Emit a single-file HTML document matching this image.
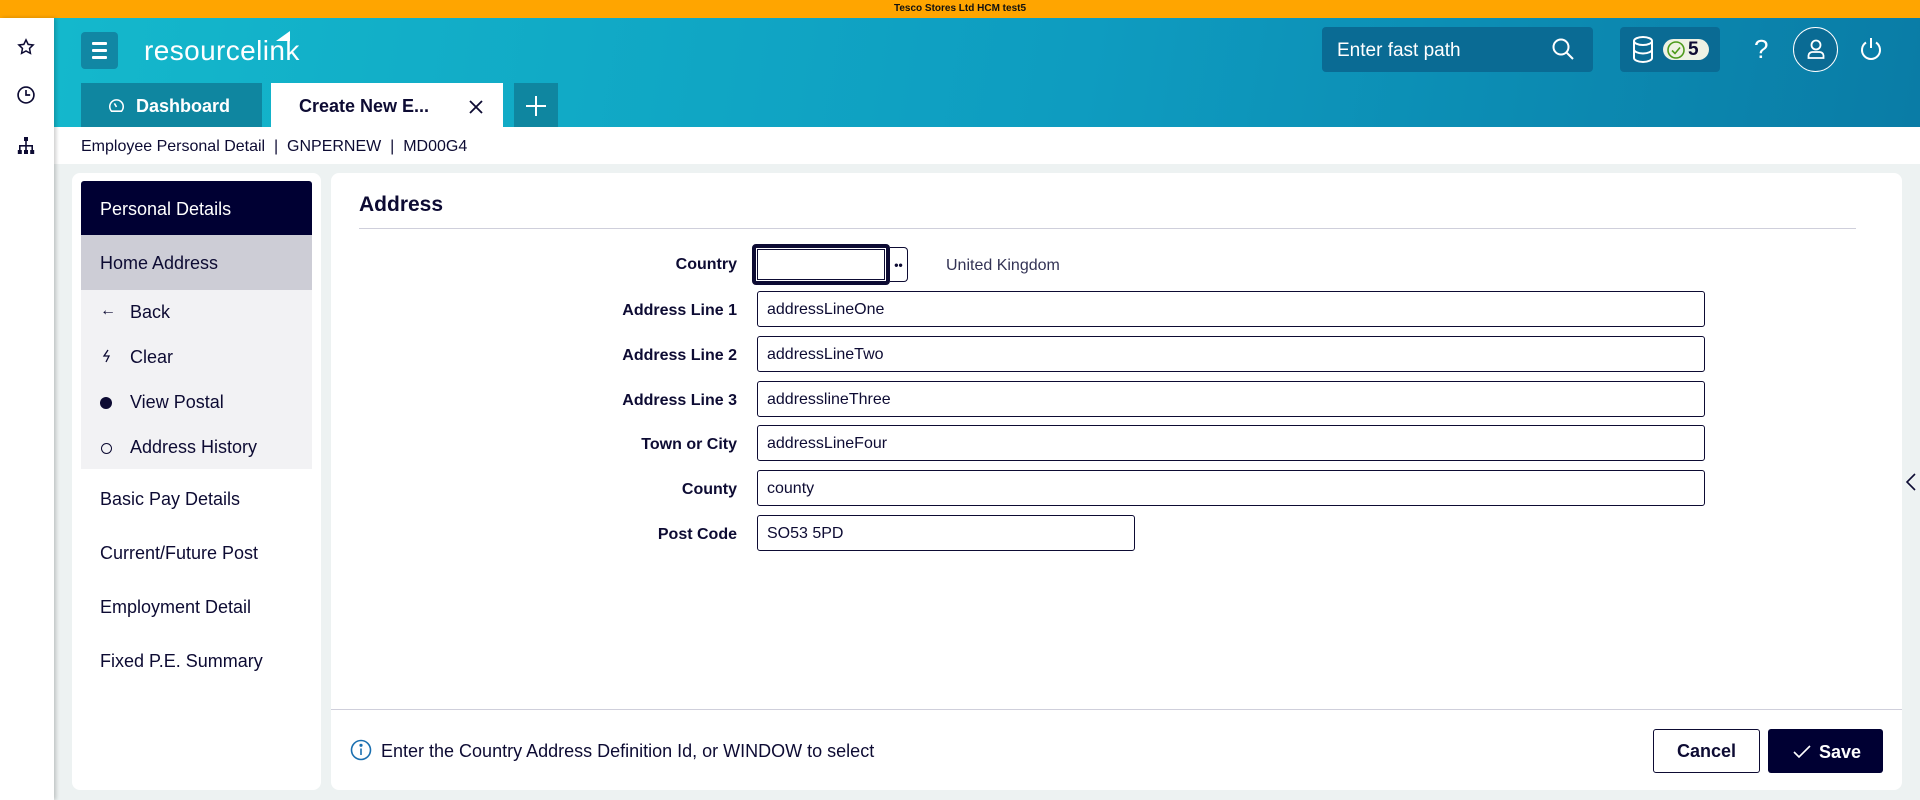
<!DOCTYPE html>
<html><head><meta charset="utf-8"><style>
*{box-sizing:border-box;margin:0;padding:0}
body{width:1920px;height:800px;overflow:hidden;background:#edf2f2;font-family:"Liberation Sans",sans-serif;color:#0d0b33;position:relative}
.abs{position:absolute}
.top{left:0;top:0;width:1920px;height:18px;background:#ffa500;font-size:10px;font-weight:bold;text-align:center;line-height:18px;color:#111}
.side{left:0;top:18px;width:54px;height:782px;background:#fff;box-shadow:2px 0 4px rgba(0,0,0,.2);z-index:3}
.hdr{left:54px;top:18px;width:1866px;height:109px;background:linear-gradient(100deg,#14b8cc 0%,#0e9cc0 55%,#0a7ca6 100%)}
.ham{left:81px;top:32px;width:37px;height:37px;background:#1187a4;border-radius:4px}
.ham i{position:absolute;left:11px;width:15px;height:3px;background:#fff;border-radius:1px}
.logo{left:144px;top:35px;color:#fff;font-size:28px;letter-spacing:0.4px}
.tab{top:83px;height:44px;font-size:18px;font-weight:bold;line-height:46px}
.search{left:1322px;top:27px;width:271px;height:45px;background:#0a6b94;border-radius:4px;color:#fff;font-size:19px;line-height:47px;padding-left:15px}
.db{left:1620px;top:27px;width:100px;height:45px;background:#0a6b94;border-radius:4px}
.bc{left:54px;top:127px;width:1866px;height:37px;background:#fff;font-size:16px;line-height:40px;padding-left:27px}
.lp{left:72px;top:173px;width:249px;height:617px;background:#fff;border-radius:8px}
.mp{left:331px;top:173px;width:1571px;height:617px;background:#fff;border-radius:8px}
.mi{position:absolute;left:9px;width:231px;font-size:18px;padding-left:19px}
.lbl{position:absolute;right:1183px;font-size:16px;font-weight:bold;text-align:right}
.inp{position:absolute;left:757px;height:36px;border:1.5px solid #0d0b33;border-radius:3px;font-size:16px;line-height:35px;padding-left:9px}
</style></head><body>
<div class="abs top">Tesco Stores Ltd HCM test5</div>
<div class="abs side">
<svg class="abs" style="left:17px;top:20px" width="18" height="18" viewBox="0 0 24 24" fill="none" stroke="#0d0b33" stroke-width="2"><path d="M12 2.5l2.9 6 6.6.8-4.8 4.6 1.2 6.6L12 17.3l-5.9 3.2 1.2-6.6L2.5 9.3l6.6-.8z"/></svg>
<svg class="abs" style="left:16px;top:67px" width="20" height="20" viewBox="0 0 24 24" fill="none" stroke="#0d0b33" stroke-width="2"><circle cx="12" cy="12" r="9.5"/><path d="M12 6v6h5"/></svg>
<svg class="abs" style="left:17px;top:119px" width="18" height="18" viewBox="0 0 18 18" fill="#0d0b33"><rect x="7" y="0" width="4" height="4"/><rect x="8.2" y="4" width="1.6" height="4"/><rect x="2" y="8" width="14" height="1.6"/><rect x="2" y="8" width="1.6" height="5"/><rect x="8.2" y="8" width="1.6" height="5"/><rect x="14.4" y="8" width="1.6" height="5"/><rect x="0.8" y="13" width="4" height="4"/><rect x="7" y="13" width="4" height="4"/><rect x="13.2" y="13" width="4" height="4"/></svg>
</div>
<div class="abs hdr"></div>
<div class="abs ham"><i style="top:10px"></i><i style="top:17px"></i><i style="top:24px"></i></div>
<div class="abs logo">resource<span style="font-weight:300">link</span></div>
<svg class="abs" style="left:276px;top:31px" width="14" height="10"><path d="M0 10L14 0V10z" fill="#fff"/></svg>
<div class="abs tab" style="left:81px;width:181px;background:#0f86a0;color:#fff;padding-left:55px">Dashboard</div>
<svg class="abs" style="left:108px;top:97px" width="17" height="17" viewBox="0 0 24 24" fill="none" stroke="#fff" stroke-width="2.2"><path d="M5 20a9.5 9.5 0 1 1 14 0z"/><path d="M12 14l-3-5"/></svg>
<div class="abs tab" style="left:271px;width:232px;background:#fff;color:#0d0b33;padding-left:28px">Create New E...</div>
<svg class="abs" style="left:469px;top:100px" width="14" height="14" stroke="#0d0b33" stroke-width="1.8"><path d="M1 1L13 13M13 1L1 13"/></svg>
<div class="abs tab" style="left:514px;width:44px;background:#0f86a0"></div>
<svg class="abs" style="left:525px;top:95px" width="22" height="22" stroke="#fff" stroke-width="2"><path d="M11 1V21M1 11H21"/></svg>
<div class="abs search">Enter fast path</div>
<svg class="abs" style="left:1551px;top:37px" width="24" height="24" viewBox="0 0 24 24" fill="none" stroke="#fff" stroke-width="2"><circle cx="10" cy="10" r="7.5"/><path d="M15.5 15.5L22 22"/></svg>
<div class="abs db"></div>
<svg class="abs" style="left:1632px;top:36px" width="22" height="27" viewBox="0 0 22 27" fill="none" stroke="#fff" stroke-width="2"><ellipse cx="11" cy="5" rx="9" ry="4"/><path d="M2 5v17c0 2 4 4 9 4s9-2 9-4V5M2 13.5c0 2 4 4 9 4s9-2 9-4"/></svg>
<div class="abs" style="left:1663px;top:39px;width:46px;height:21px;background:#eef2e4;border-radius:11px"></div>
<svg class="abs" style="left:1667px;top:41px" width="18" height="18" viewBox="0 0 18 18" fill="none" stroke="#4c9a1c" stroke-width="1.6"><circle cx="9" cy="9" r="8"/><path d="M5 9.5l3 3 5-6"/></svg>
<div class="abs" style="left:1688px;top:39px;font-size:19px;font-weight:bold;color:#0d0b33">5</div>
<div class="abs" style="left:1754px;top:34px;font-size:26px;color:#fff">?</div>
<div class="abs" style="left:1793px;top:27px;width:45px;height:45px;border:1.5px solid #fff;border-radius:50%;background:#0a6b94"></div>
<svg class="abs" style="left:1805px;top:38px" width="22" height="22" viewBox="0 0 22 22" fill="none" stroke="#fff" stroke-width="1.8"><circle cx="11" cy="7" r="4.5"/><path d="M3.5 20v-2.5c0-2 2-3.5 4-3.5h7c2 0 4 1.5 4 3.5V20z"/></svg>
<svg class="abs" style="left:1859px;top:37px" width="24" height="26" viewBox="0 0 24 26" fill="none" stroke="#fff" stroke-width="2"><path d="M12 1v10M7 5.5a9 9 0 1 0 10 0"/></svg>
<div class="abs bc">Employee Personal Detail &nbsp;| &nbsp;GNPERNEW &nbsp;| &nbsp;MD00G4</div>
<div class="abs lp">
<div class="mi" style="top:8px;height:54px;line-height:56px;background:#000033;color:#fff;border-radius:3px 3px 0 0">Personal Details</div>
<div class="mi" style="top:62px;height:55px;line-height:57px;background:#cdcdd6">Home Address</div>
<div class="mi" style="top:117px;height:179px;background:#f2f2f4;padding-left:0">
<div class="abs" style="left:19px;top:12px;font-size:16px">&#8592;</div><div class="abs" style="left:49px;top:12px">Back</div>
<svg class="abs" style="left:21px;top:59px" width="10" height="14" viewBox="0 0 10 14" fill="none" stroke="#0d0b33" stroke-width="1.3"><path d="M6 1L2 7h5l-3 6"/></svg><div class="abs" style="left:49px;top:57px">Clear</div>
<div class="abs" style="left:19px;top:107px;width:12px;height:12px;border-radius:50%;background:#0d0b33"></div><div class="abs" style="left:49px;top:102px">View Postal</div>
<div class="abs" style="left:20px;top:153px;width:11px;height:11px;border-radius:50%;border:1.2px solid #0d0b33"></div><div class="abs" style="left:49px;top:147px">Address History</div>
</div>
<div class="mi" style="top:316px">Basic Pay Details</div>
<div class="mi" style="top:370px">Current/Future Post</div>
<div class="mi" style="top:424px">Employment Detail</div>
<div class="mi" style="top:478px">Fixed P.E. Summary</div>
</div>
<div class="abs mp">
<div class="abs" style="left:28px;top:20px;font-size:21px;font-weight:bold">Address</div>
<div class="abs" style="left:28px;top:55px;width:1497px;height:1px;background:#cfcfdb"></div>
<div class="abs" style="left:0;top:536px;width:1571px;height:1px;background:#cfcfdb"></div>
<svg class="abs" style="left:19px;top:566px" width="22" height="22" viewBox="0 0 22 22" fill="none" stroke="#1a6fb0" stroke-width="1.6"><circle cx="11" cy="11" r="9.5"/><path d="M11 9.5v6.5"/><circle cx="11" cy="6.3" r=".8" fill="#1a6fb0"/></svg>
<div class="abs" style="left:50px;top:568px;font-size:18px">Enter the Country Address Definition Id, or WINDOW to select</div>
<div class="abs" style="left:1322px;top:556px;width:107px;height:44px;border:1.5px solid #0d0b33;border-radius:3px;font-size:18px;font-weight:bold;text-align:center;line-height:43px">Cancel</div>
<div class="abs" style="left:1437px;top:556px;width:115px;height:44px;background:#000033;border-radius:3px;font-size:18px;font-weight:bold;color:#fff;line-height:46px;padding-left:51px">Save</div>
<svg class="abs" style="left:1462px;top:572px" width="18" height="14" fill="none" stroke="#fff" stroke-width="1.6"><path d="M1 7l5 5L17 1"/></svg>
</div>
<div class="lbl" style="top:256px">Country</div>
<div class="abs" style="left:752px;top:244px;width:138px;height:41px;border:4px solid #0d0b33;border-radius:4px"><div style="margin:1px;height:31px;border:1px solid #0d0b33"></div></div>
<div class="abs" style="left:890px;top:247px;width:18px;height:35px;border:1px solid #0d0b33;border-left:none;border-radius:0 4px 4px 0;font-size:12px;font-weight:bold;line-height:34px;text-align:center">••</div>
<div class="abs" style="left:946px;top:257px;font-size:16px;color:#333355">United Kingdom</div>
<div class="lbl" style="top:302px">Address Line 1</div><div class="inp" style="top:291px;width:948px">addressLineOne</div>
<div class="lbl" style="top:347px">Address Line 2</div><div class="inp" style="top:336px;width:948px">addressLineTwo</div>
<div class="lbl" style="top:392px">Address Line 3</div><div class="inp" style="top:381px;width:948px">addresslineThree</div>
<div class="lbl" style="top:436px">Town or City</div><div class="inp" style="top:425px;width:948px">addressLineFour</div>
<div class="lbl" style="top:481px">County</div><div class="inp" style="top:470px;width:948px">county</div>
<div class="lbl" style="top:526px">Post Code</div><div class="inp" style="top:515px;width:378px">SO53 5PD</div>
<svg class="abs" style="left:1906px;top:473px" width="10" height="18" fill="none" stroke="#0d0b33" stroke-width="1.6"><path d="M9 1L1 9l8 8"/></svg>
</body></html>
